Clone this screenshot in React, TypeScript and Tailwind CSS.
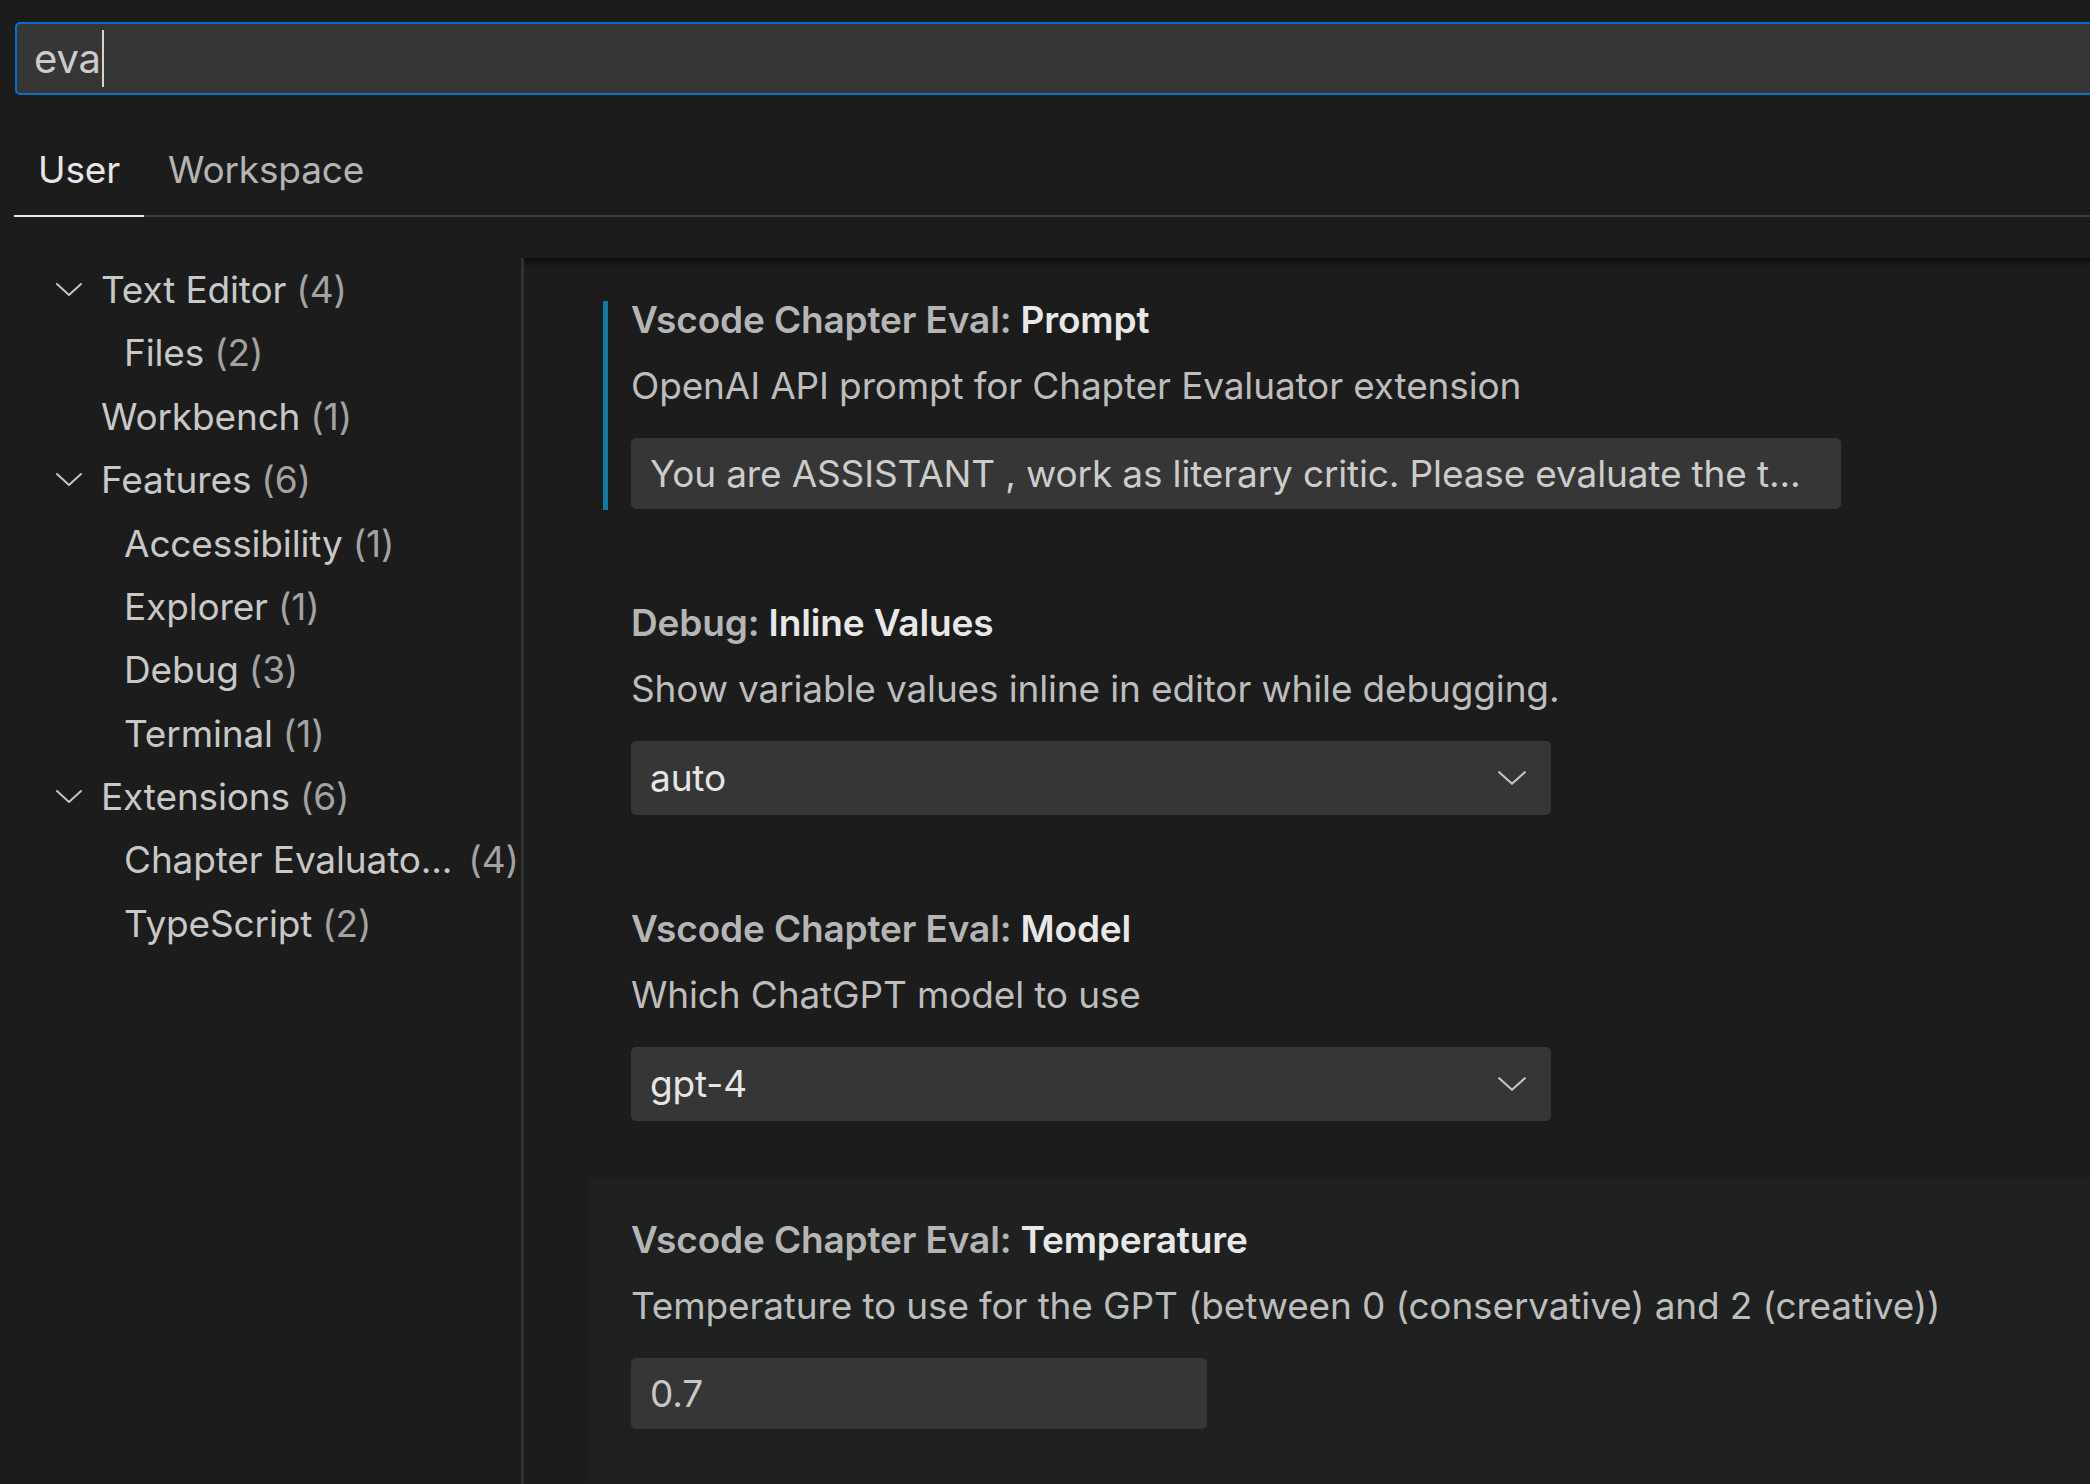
import React from 'react';

const tocItems = [
  { label: 'Text Editor', count: 4, level: 1, open: true },
  { label: 'Files', count: 2, level: 2 },
  { label: 'Workbench', count: 1, level: 1 },
  { label: 'Features', count: 6, level: 1, open: true },
  { label: 'Accessibility', count: 1, level: 2 },
  { label: 'Explorer', count: 1, level: 2 },
  { label: 'Debug', count: 3, level: 2 },
  { label: 'Terminal', count: 1, level: 2 },
  { label: 'Extensions', count: 6, level: 1, open: true },
  { label: 'Chapter Evaluato...', count: 4, level: 2, clipped: true },
  { label: 'TypeScript', count: 2, level: 2 },
];

function Chevron({ w, h, stroke }: { w: number; h: number; stroke: number }) {
  return (
    <svg width={w} height={h} viewBox={`0 0 ${w} ${h}`} fill="none">
      <polyline
        points={`${stroke},${stroke} ${w / 2},${h - stroke} ${w - stroke},${stroke}`}
        stroke="#c5c5c5"
        strokeWidth={stroke}
        strokeLinecap="round"
        strokeLinejoin="round"
      />
    </svg>
  );
}

function SettingTitle({ category, label }: { category: string; label: string }) {
  return (
    <div className="leading-[52px] font-semibold whitespace-nowrap">
      <span className="text-[#b5b5b5]">{category}: </span>
      <span className="text-[#e8e8e8]">{label}</span>
    </div>
  );
}

function SettingRow({
  category,
  label,
  description,
  modified,
  hovered,
  height,
  children,
}: {
  category: string;
  label: string;
  description: string;
  modified?: boolean;
  hovered?: boolean;
  height: string;
  children: React.ReactNode;
}) {
  return (
    <div className={`relative flex ${height} pl-[42px] pt-[36px] ${hovered ? 'bg-[#1f2020]' : ''}`}>
      {modified && <div className="absolute left-[14px] top-[43px] h-[209px] w-[5px] bg-[#0c7d9d]" />}
      <div className="flex flex-col">
        <SettingTitle category={category} label={label} />
        <div className="mt-[14px] leading-[52px] text-[#bdbdbd] whitespace-nowrap">{description}</div>
        <div className="mt-[26px]">{children}</div>
      </div>
    </div>
  );
}

function SelectBox({ value }: { value: string }) {
  return (
    <div className="flex h-[74px] w-[920px] items-center justify-between rounded-[5px] bg-[#363636] pl-[19px] pr-[24px]">
      <span className="text-[#e6e6e6]">{value}</span>
      <Chevron w={30} h={16} stroke={2.2} />
    </div>
  );
}

export default function App() {
  return (
    <div className="flex h-[1484px] w-[2090px] flex-col overflow-hidden bg-[#1c1c1c] font-['Inter',sans-serif] text-[37px] tracking-[-0.004em] text-[#cccccc]">
      {/* search */}
      <div className="flex pl-[15px] pt-[22px]">
        <div className="-mr-[10px] flex h-[73px] flex-1 items-center rounded-[5px] border-2 border-[#0a70c4] bg-[#363636] pl-[17px]">
          <span className="text-[40px] leading-[40px] text-[#cccccc]">eva</span>
          <span className="ml-[1px] h-[57px] w-[2px] bg-[#d4d4d4]" />
        </div>
      </div>

      {/* tabs */}
      <div className="ml-[14px] mt-[49px] flex border-b-2 border-[#3e3e3e]">
        <div className="-mb-[2px] border-b-2 border-[#e7e7e7] px-[24px] pb-[19px] leading-[52px] text-[#e7e7e7]">User</div>
        <div className="-mb-[2px] border-b-2 border-transparent px-[24px] pb-[19px] leading-[52px] text-[#b4b4b4]">Workspace</div>
      </div>

      {/* body */}
      <div className="mt-[41px] flex flex-1">
        <div className="flex w-[521px] shrink-0 flex-col">
          {tocItems.map((item) => (
            <div key={item.label} className="flex h-[63.4px] items-center whitespace-nowrap">
              {item.level === 1 ? (
                <div className="flex w-[101px] shrink-0 justify-start pl-[55px]">
                  {item.open && <Chevron w={28} h={15} stroke={2} />}
                </div>
              ) : (
                <div className="w-[124px] shrink-0" />
              )}
              <span className="text-[#c8c8c8]">{item.label}</span>
              <span className={`${item.clipped ? 'ml-[16px]' : 'ml-[10px]'} text-[#a2a2a2]`}>({item.count})</span>
            </div>
          ))}
        </div>
        <div className="w-[3px] shrink-0 bg-[#303030]" />
        <div className="relative flex-1 pl-[65px]">
          <div className="absolute inset-x-0 top-0 h-[10px] bg-gradient-to-b from-[#0e0e0e] to-transparent" />
          <SettingRow
            category="Vscode Chapter Eval"
            label="Prompt"
            description="OpenAI API prompt for Chapter Evaluator extension"
            modified
            height="h-[303px]"
          >
            <div className="flex h-[71px] w-[1210px] items-center rounded-[5px] bg-[#363636] pl-[19px] whitespace-nowrap">
              You are ASSISTANT , work as literary critic. Please evaluate the t...
            </div>
          </SettingRow>
          <SettingRow category="Debug" label="Inline Values" description="Show variable values inline in editor while debugging." height="h-[306px]">
            <SelectBox value="auto" />
          </SettingRow>
          <SettingRow category="Vscode Chapter Eval" label="Model" description="Which ChatGPT model to use" height="h-[311px]">
            <SelectBox value="gpt-4" />
          </SettingRow>
          <SettingRow
            category="Vscode Chapter Eval"
            label="Temperature"
            description="Temperature to use for the GPT (between 0 (conservative) and 2 (creative))"
            hovered
            height="h-[303px]"
          >
            <div className="flex h-[71px] w-[576px] items-center rounded-[5px] bg-[#363636] pl-[19px] text-[#c8c8c8]">0.7</div>
          </SettingRow>
        </div>
      </div>
    </div>
  );
}
